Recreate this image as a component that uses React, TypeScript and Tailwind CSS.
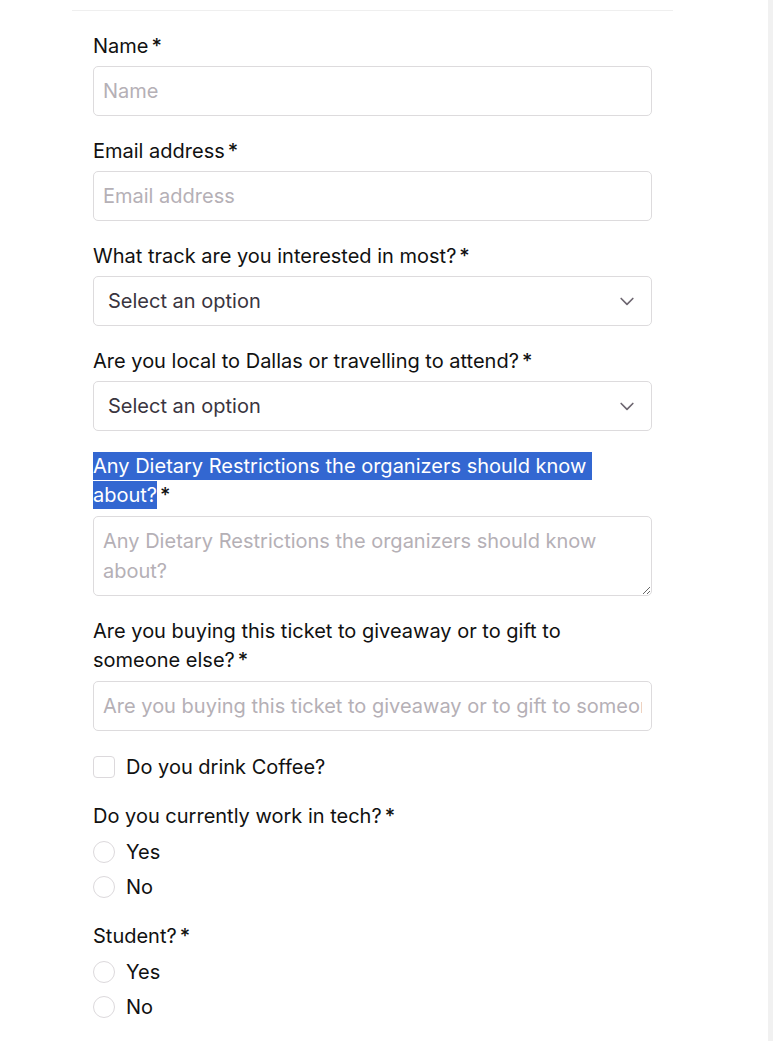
import React from "react";

const font = { fontFamily: "Inter, 'Noto Sans', sans-serif" };

function Label({ children }: { children: React.ReactNode }) {
  return (
    <div className="text-[20px] leading-[29px] font-normal text-[#111111]">
      {children}
      <span className="ml-[3px] font-medium">*</span>
    </div>
  );
}

function Chevron() {
  return (
    <svg width="20" height="20" viewBox="0 0 24 24" fill="none" stroke="#6d6670" strokeWidth="2" strokeLinecap="round" strokeLinejoin="round">
      <path d="M5 9l7 7 7-7" />
    </svg>
  );
}

function SelectBox() {
  return (
    <div className="h-[50px] w-full rounded-[5px] border border-[#dddbdd] bg-white flex items-center justify-between pl-[14px] pr-[14px]">
      <span className="text-[20px] text-[#3a3540]">Select an option</span>
      <Chevron />
    </div>
  );
}

function Radio({ label }: { label: string }) {
  return (
    <div className="flex items-center h-[29px]">
      <div className="w-[22px] h-[22px] rounded-full border border-[#dcd9dc] bg-white" />
      <span className="ml-[11px] text-[20px] text-[#111111]">{label}</span>
    </div>
  );
}

const inputCls =
  "h-[50px] w-full rounded-[5px] border border-[#dddbdd] bg-white px-[9px] text-[20px] text-[#111] outline-none placeholder:text-[#b5b0b6]";

export default function App() {
  return (
    <div className="flex min-h-[1041px] bg-white" style={font}>
      <div className="flex-1">
        <div className="mt-[10px] ml-[72px] w-[601px] border-t border-[#efefef] px-[21px] pt-[21px] flex flex-col gap-[21px]">
          <div className="flex flex-col gap-[5px]">
            <Label>Name</Label>
            <input className={inputCls} placeholder="Name" style={font} />
          </div>
          <div className="flex flex-col gap-[5px]">
            <Label>Email address</Label>
            <input className={inputCls} placeholder="Email address" style={font} />
          </div>
          <div className="flex flex-col gap-[5px]">
            <Label>What track are you interested in most?</Label>
            <SelectBox />
          </div>
          <div className="flex flex-col gap-[5px]">
            <Label>Are you local to Dallas or travelling to attend?</Label>
            <SelectBox />
          </div>
          <div className="flex flex-col gap-[6px]">
            <Label>
              <span className="bg-[#3367d1] text-white py-[2.4px] [box-decoration-break:clone]">
                {"Any Dietary Restrictions the organizers should know\u00a0"}
              </span>
              <br />
              <span className="bg-[#3367d1] text-white py-[2.4px] [box-decoration-break:clone]">about?</span>
            </Label>
            <textarea
              className="h-[80px] w-full rounded-[5px] border border-[#dddbdd] bg-white px-[9px] py-[9px] text-[20px] leading-[30px] text-[#111] outline-none placeholder:text-[#b5b0b6] block"
              placeholder="Any Dietary Restrictions the organizers should know about?"
              style={font}
            />
          </div>
          <div className="flex flex-col gap-[6px]">
            <Label>Are you buying this ticket to giveaway or to gift to someone else?</Label>
            <input
              className={inputCls}
              placeholder="Are you buying this ticket to giveaway or to gift to someone else?"
              style={font}
            />
          </div>
          <div className="flex items-center h-[29px]">
            <div className="w-[22px] h-[22px] rounded-[4px] border border-[#dcd9dc] bg-white" />
            <span className="ml-[11px] text-[20px] text-[#111111]">Do you drink Coffee?</span>
          </div>
          <div className="flex flex-col gap-[6px]">
            <Label>Do you currently work in tech?</Label>
            <Radio label="Yes" />
            <Radio label="No" />
          </div>
          <div className="flex flex-col gap-[6px]">
            <Label>Student?</Label>
            <Radio label="Yes" />
            <Radio label="No" />
          </div>
        </div>
      </div>
      <div className="w-[5px] bg-[#f1f1f1]" />
    </div>
  );
}
